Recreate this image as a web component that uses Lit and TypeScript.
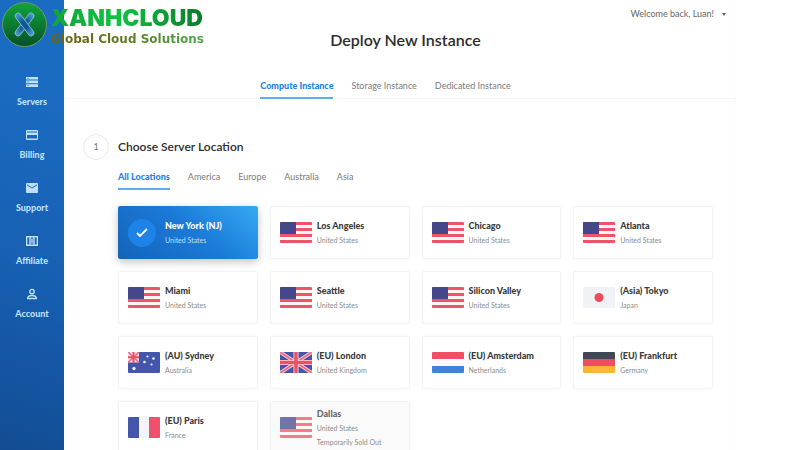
import { LitElement, html, css, svg } from "lit";
import { customElement, property, state } from "lit/decorators.js";
import { classMap } from "lit/directives/class-map.js";

const stripes = [0, 1, 2, 3].map((i) => svg`<rect y=${i * 6} width="32" height="3" fill="#ee5468"/>`);

const flags: Record<string, unknown> = {
  us: svg`<rect width="32" height="21" fill="#fdf4f6"/>${stripes}<rect width="16" height="12" fill="#45478b"/>`,
  jp: svg`<rect width="32" height="21" fill="#f1f2f6"/><circle cx="16" cy="10.5" r="4.5" fill="#ec4b60"/>`,
  au: svg`<rect width="32" height="21" fill="#4356ab"/>
    <rect width="11" height="10.5" fill="#f6dfe8"/>
    <path d="M0 0L11 10.5M11 0L0 10.5" stroke="#ee6a7c" stroke-width="1.6"/>
    <path d="M5.5 0V10.5M0 5.2H11" stroke="#ec4b60" stroke-width="2"/>
    <g fill="#eef1fb"><circle cx="6" cy="16.5" r="1.7"/><circle cx="19.5" cy="4.5" r="1.1"/><circle cx="16.5" cy="10" r="1.3"/><circle cx="25.5" cy="6.5" r="1.3"/><circle cx="23.5" cy="12.5" r="1.1"/></g>`,
  gb: svg`<rect width="32" height="21" fill="#4356ab"/>
    <path d="M0 0L32 21M32 0L0 21" stroke="#f3c3d0" stroke-width="3.6"/>
    <path d="M0 0L32 21M32 0L0 21" stroke="#ee6a7c" stroke-width="1.6"/>
    <path d="M16 0V21M0 10.5H32" stroke="#f8dbe4" stroke-width="5"/>
    <path d="M16 0V21M0 10.5H32" stroke="#ee4f63" stroke-width="3.4"/>`,
  nl: svg`<rect width="32" height="21" fill="#fbfbfd"/><rect width="32" height="7" fill="#ec5062"/><rect y="14" width="32" height="7" fill="#4282db"/>`,
  de: svg`<rect width="32" height="7" fill="#434655"/><rect y="7" width="32" height="7" fill="#ed4e5f"/><rect y="14" width="32" height="7" fill="#fcb43c"/>`,
  fr: svg`<rect width="32" height="21" fill="#f4f5f9"/><rect width="11" height="21" fill="#4356ab"/><rect x="21" width="11" height="21" fill="#f0506a"/>`,
};

const icons: Record<string, unknown> = {
  servers: svg`<path fill="currentColor" d="M1 1h12v2.6H1zM1 4.6h12v2.6H1zM1 8.2h12v2.8H1z"/><path stroke="#1862b5" stroke-width=".5" d="M2 2.3h2M2 5.9h2M2 9.6h2"/>`,
  billing: svg`<path fill="currentColor" fill-rule="evenodd" d="M2 1h10a1 1 0 0 1 1 1v8a1 1 0 0 1-1 1H2a1 1 0 0 1-1-1V2a1 1 0 0 1 1-1zM2 3.400h10v-.8H2zM2 6v3.400h10V6z"/>`,
  support: svg`<rect x="1" y="1" width="12" height="10" rx="1" fill="currentColor"/><path d="M2 2.800l5 3.200 5-3.200" fill="none" stroke="#1862b5"/>`,
  affiliate: svg`<path fill="none" stroke="currentColor" stroke-width="1.4" d="M1.700 1.700h10.600v8.600H1.700zM5 2v8M9 2v8"/><path stroke="currentColor" stroke-width="1.4" d="M7 3.500v5"/>`,
  account: svg`<g fill="none" stroke="currentColor" stroke-width="1.4"><circle cx="7" cy="3.6" r="2.2"/><path d="M2.700 10.500c0-2 2-3 4.300-3s4.300 1 4.300 3z"/></g>`,
};

interface Place { name: string; country: string; flag: string; note?: string }

const places: Place[] = [
  { name: "New York (NJ)", country: "United States", flag: "us" },
  { name: "Los Angeles", country: "United States", flag: "us" },
  { name: "Chicago", country: "United States", flag: "us" },
  { name: "Atlanta", country: "United States", flag: "us" },
  { name: "Miami", country: "United States", flag: "us" },
  { name: "Seattle", country: "United States", flag: "us" },
  { name: "Silicon Valley", country: "United States", flag: "us" },
  { name: "(Asia) Tokyo", country: "Japan", flag: "jp" },
  { name: "(AU) Sydney", country: "Australia", flag: "au" },
  { name: "(EU) London", country: "United Kingdom", flag: "gb" },
  { name: "(EU) Amsterdam", country: "Netherlands", flag: "nl" },
  { name: "(EU) Frankfurt", country: "Germany", flag: "de" },
  { name: "(EU) Paris", country: "France", flag: "fr" },
  { name: "Dallas", country: "United States", flag: "us", note: "Temporarily Sold Out" },
];

@customElement("location-card")
class LocationCard extends LitElement {
  @property({ attribute: false }) place!: Place;
  @property({ type: Boolean }) selected = false;

  static styles = css`
    :host { display: block; }
    .card {
      box-sizing: border-box; width: 100%; height: 53px; padding: 0 9px;
      display: flex; align-items: center; gap: 5px; text-align: left;
      font-family: inherit; background: #fff; color: #3a3a3a;
      border: 1px solid #f3f3f4; border-radius: 2px; box-shadow: 0 0 2px #f4f4f5;
    }
    .selected {
      color: #fff; border-color: transparent;
      background: linear-gradient(40deg, #1463b8, #1b7bd9 55%, #35aaf2) border-box;
      box-shadow: 0 3px 8px #0000003d;
    }
    .soldout { background: #fafafa; color: #6a6a6a; }
    .soldout .flag { opacity: .75; }
    .flag { flex: none; width: 32px; height: 21px; border-radius: 1px; }
    .tick { flex: none; width: 28px; height: 28px; margin-right: 4px; }
    .text { display: flex; flex-direction: column; white-space: nowrap; }
    .name { font-size: 9px; font-weight: 900; line-height: 14px; }
    .country { font-size: 7px; line-height: 14px; color: #8d8d8d; }
    .selected .country { color: #c3dffa; }
  `;

  render() {
    const p = this.place;
    return html`<button type="button" class=${classMap({ card: true, selected: this.selected, soldout: !!p.note })}
      ?disabled=${!!p.note} aria-pressed=${this.selected}>
      ${this.selected
        ? html`<svg class="tick" viewBox="0 0 28 28"><circle cx="14" cy="14" r="14" fill="#1d83e6"/><path d="M9 14l3 3 7-7" fill="none" stroke="#fff" stroke-width="1.8"/></svg>`
        : html`<svg class="flag" viewBox="0 0 32 21">${flags[p.flag]}</svg>`}
      <span class="text">
        <span class="name">${p.name}</span>
        <span class="country">${p.country}</span>
        ${p.note ? html`<span class="country">${p.note}</span>` : null}
      </span>
    </button>`;
  }
}

@customElement("app-root")
class AppRoot extends LitElement {
  @state() private selected = "New York (NJ)";

  static styles = css`
    :host {
      display: flex; height: 100vh; overflow: hidden; position: relative;
      background: #fff; font-family: Lato, "Open Sans", sans-serif; color: #2d2d2d;
    }
    a { color: inherit; text-decoration: none; }
    .brand { position: absolute; left: 2px; top: 2px; display: flex; gap: 4px; align-items: center; }
    .mark { width: 45px; height: 45px; }
    .words { display: flex; flex-direction: column; }
    .title, .tagline { color: transparent; background-clip: text; -webkit-background-clip: text; }
    .title {
      font-family: Inter, sans-serif; font-size: 23px; font-weight: 900; line-height: 28px;
      background-image: linear-gradient(90deg, #12a53a, #0fc242 45%, #087c2c);
    }
    .tagline {
      font-family: "DejaVu Sans", sans-serif; font-size: 12px; font-weight: 700; line-height: 14px;
      background-image: linear-gradient(90deg, #70640f, #5c7a1f 50%, #4da64c);
    }
    .side {
      flex: none; width: 64px; box-sizing: border-box; padding-top: 75px;
      background: linear-gradient(200deg, #1a6cc2 20%, #175fb2 60%, #124c94);
      display: flex; flex-direction: column; gap: 19px;
    }
    .item { display: flex; flex-direction: column; align-items: center; gap: 6px; color: #bfdffd; }
    .item svg { width: 14px; height: 14px; }
    .item span { font-size: 9px; font-weight: 900; line-height: 14px; }
    .main { flex: 1; min-width: 0; margin-right: 64px; border-right: 1px solid #fbfbfb; }
    .top { display: flex; justify-content: flex-end; padding: 6px 9px 0 0; }
    .user {
      display: flex; align-items: center; gap: 8px; padding: 0; border: 0; background: none;
      font: 9px/16px Lato, sans-serif; color: #666;
    }
    .user svg { width: 4px; height: 3px; }
    h1 { margin: 8px 0 0; padding-left: 12px; text-align: center; font-size: 16px; line-height: 20px; font-weight: 600; }
    .tabs { display: flex; gap: 18px; color: #7c7c7c; font-size: 9px; line-height: 14px; }
    .kinds { justify-content: center; margin-top: 29px; padding-right: 28px; border-bottom: 1px solid #f4f4f4; }
    .tab { padding-bottom: 4px; border-bottom: 2px solid transparent; }
    .kinds .tab { margin-bottom: -1px; }
    .on { color: #2482e8; font-weight: 900; border-color: #5aaef2; }
    .step { display: grid; grid-template-columns: 26px 1fr; column-gap: 9px; align-items: center; padding: 35px 22px 0 19px; }
    .num {
      box-sizing: border-box; width: 26px; height: 26px; border: 1px solid #e6eaeb; border-radius: 50%;
      font-size: 9px; line-height: 24px; text-align: center; color: #777;
    }
    h2 { margin: 0; font-size: 12px; line-height: 26px; font-weight: 600; }
    .body { grid-column: 2; min-width: 0; padding-top: 10px; }
    .grid { display: grid; grid-template-columns: repeat(4, 1fr); gap: 12px; margin-top: 16px; }
  `;

  render() {
    return html`
      <nav class="side">
        ${["Servers", "Billing", "Support", "Affiliate", "Account"].map((n) => html`
          <a class="item" href="#"><svg viewBox="0 0 14 12">${icons[n.toLowerCase()]}</svg><span>${n}</span></a>`)}
      </nav>
      <main class="main">
        <div class="top"><button class="user" type="button">Welcome back, Luan!
          <svg viewBox="0 0 4 3"><path d="M0 0h4L2 3z" fill="#666"/></svg></button></div>
        <h1>Deploy New Instance</h1>
        <nav class="tabs kinds">
          ${["Compute Instance", "Storage Instance", "Dedicated Instance"].map((t, i) => html`
            <a href="#" class=${classMap({ tab: true, on: i === 0 })}>${t}</a>`)}
        </nav>
        <section class="step">
          <span class="num">1</span><h2>Choose Server Location</h2>
          <div class="body">
            <nav class="tabs">
              ${["All Locations", "America", "Europe", "Australia", "Asia"].map((t, i) => html`
                <a href="#" class=${classMap({ tab: true, on: i === 0 })}>${t}</a>`)}
            </nav>
            <div class="grid">
              ${places.map((p) => html`<location-card .place=${p} .selected=${p.name === this.selected}
                @click=${() => { if (!p.note) this.selected = p.name; }}></location-card>`)}
            </div>
          </div>
        </section>
      </main>
      <a class="brand" href="#">
        <svg class="mark" viewBox="0 0 45 45">
          <defs>
            <linearGradient id="disc" x2="0" y2="1"><stop stop-color="#12a33d"/><stop offset=".5" stop-color="#0b7c30"/><stop offset="1" stop-color="#064f25"/></linearGradient>
            <radialGradient id="arm" gradientUnits="userSpaceOnUse" cx="22.5" cy="22.5" r="13"><stop offset=".3" stop-color="#0f559c"/><stop offset="1" stop-color="#4fa0cf"/></radialGradient>
          </defs>
          <circle cx="22.5" cy="22.5" r="22" fill="url(#disc)" stroke="#6f9a62"/>
          <g stroke-linecap="round" fill="none">
            <path d="M29 14L16 31" stroke="#86bfc4" stroke-width="6.5"/>
            <path d="M29 14L16 31" stroke="url(#arm)" stroke-width="5"/>
            <path d="M16 14L29 31" stroke="#86bfc4" stroke-width="6.5"/>
            <path d="M16 14L29 31" stroke="url(#arm)" stroke-width="5"/>
          </g>
        </svg>
        <span class="words"><span class="title">XANHCLOUD</span><span class="tagline">Global Cloud Solutions</span></span>
      </a>`;
  }
}
